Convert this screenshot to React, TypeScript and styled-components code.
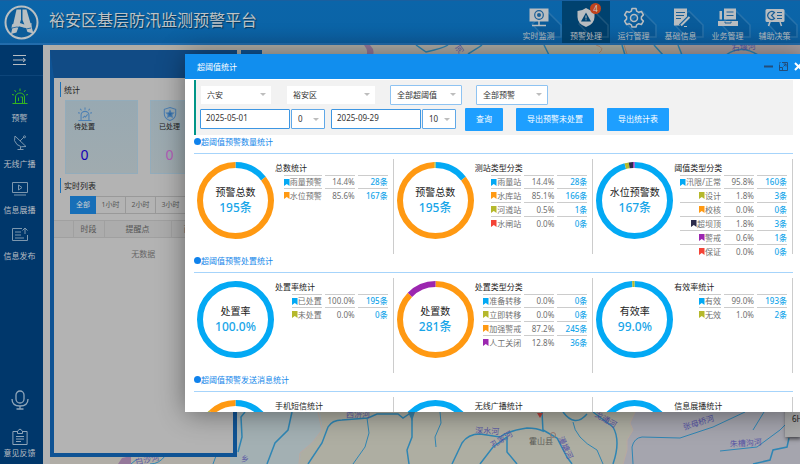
import React from 'react';
import styled, { createGlobalStyle } from 'styled-components';

const C = {
  blue: '#03a9f4',
  orange: '#ff9912',
  olive: '#b5b82c',
  navy: '#2c2c4c',
  purple: '#9c27b0',
  red: '#f44336',
  primary: '#118eee',
};

const GlobalStyle = createGlobalStyle`
  *, *::before, *::after { box-sizing: border-box; }
  body {
    margin: 0;
    font-family: "Noto Sans", "Noto Sans CJK SC", sans-serif;
    font-size: 8px;
    line-height: 12px;
    color: #222;
  }
  button, input, select { font: inherit; color: inherit; margin: 0; }
  svg { display: block; }
`;

/* ---------- shell ---------- */

const Shell = styled.div`
  position: relative;
  display: flex;
  flex-direction: column;
  height: 100vh;
  overflow: hidden;
  background: #b4b4b4;
`;

const Header = styled.header`
  display: flex;
  justify-content: space-between;
  height: 45px;
  flex: none;
  padding: 0 2px 0 4px;
  background: linear-gradient(#0b65a9, #0b64a7 60%, #0c5c9c);
  border-top: 1px solid #1a5f9f;
  border-bottom: 2px solid #226cac;
`;

const Brand = styled.div`
  display: flex;
  align-items: center;
  gap: 10px;
`;

const Title = styled.h1`
  margin: 0;
  padding-bottom: 4px;
  font-size: 16px;
  line-height: 20px;
  font-weight: 400;
  color: #bdc3c6;
  text-shadow: 1px 1px 1px rgba(0, 0, 0, 0.5);
`;

const Nav = styled.nav`
  display: flex;
`;

const NavItem = styled.button<{ $active?: boolean }>`
  position: relative;
  display: flex;
  flex-direction: column;
  align-items: center;
  gap: 2px;
  width: ${p => (p.$active ? 48 : 47)}px;
  padding: 6px 0 0;
  border: 0;
  overflow: hidden;
  white-space: nowrap;
  background: ${p => (p.$active ? '#00426f' : 'transparent')};
  color: #b8bcbf;
`;

const Badge = styled.span`
  position: absolute;
  top: 2px;
  right: 9px;
  width: 11px;
  height: 11px;
  border-radius: 50%;
  background: #c0431c;
  color: #ccc;
  line-height: 11px;
  text-align: center;
`;

const Main = styled.div`
  display: flex;
  flex: 1;
  min-height: 0;
`;

const Sidebar = styled.aside`
  display: flex;
  flex-direction: column;
  width: 43px;
  flex: none;
  padding-right: 4px;
  padding-bottom: 5px;
  background: #00376b;
  color: #b8bdc2;
`;

const SideToggle = styled.button`
  display: flex;
  justify-content: center;
  align-items: center;
  height: 31px;
  margin: 0 -4px 2px 0;
  padding: 0 4px 0 0;
  border: 0;
  border-bottom: 1px solid #0d457a;
  background: none;
  color: #b8bdc2;
`;

const SideItem = styled.button`
  display: flex;
  flex-direction: column;
  align-items: center;
  justify-content: space-between;
  height: 36px;
  margin-top: 10px;
  padding: 0;
  border: 0;
  background: none;
  white-space: nowrap;
`;

const SideFoot = styled.div`
  display: flex;
  flex-direction: column;
  align-items: center;
  gap: 18px;
  margin-top: auto;
`;

const FootButton = styled.button`
  display: flex;
  flex-direction: column;
  align-items: center;
  gap: 1px;
  padding: 0;
  border: 0;
  background: none;
  white-space: nowrap;
`;

/* ---------- map and left panel ---------- */

const MapArea = styled.main`
  position: relative;
  flex: 1;
  min-width: 0;
  background: #aeaea2;
`;

const MapSvg = styled.svg`
  width: 100%;
  height: 100%;
  font-size: 8px;
`;

const Panel = styled.section`
  position: absolute;
  top: 5px;
  bottom: 7px;
  left: 7px;
  width: 187px;
  display: flex;
  flex-direction: column;
  border: 4px solid #0f5394;
  border-top: 28px solid #114b85;
  background: #b3b3b3;
  overflow: hidden;
`;

const PanelTab = styled.div`
  position: absolute;
  top: 5px;
  left: 198px;
  width: 21px;
  height: 28px;
  background: #0f5394;
`;

const PanelTitle = styled.h2`
  margin: 4px 0 3px 6px;
  padding-left: 3px;
  border-left: 1px solid #1a70b8;
  font-size: 8px;
  font-weight: 400;
  line-height: 15px;
`;

const StatRow = styled.div`
  display: grid;
  grid-template-columns: repeat(2, 73px);
  gap: 12px;
  padding-left: 11px;
`;

const StatCard = styled.div`
  display: flex;
  height: 74px;
  border: 1px solid #93acbb;
  background: linear-gradient(#98a9b2, #a0abaf);
`;

const StatContent = styled.div`
  display: flex;
  flex-direction: column;
  align-items: center;
  width: 37px;
  padding-top: 6px;
  font-size: 7px;
`;

const StatValue = styled.strong<{ $color: string }>`
  margin-top: 13px;
  font-size: 14px;
  line-height: 18px;
  font-weight: 400;
  color: ${p => p.$color};
`;

const Tabs = styled.div`
  display: flex;
  padding: 0 0 6px 16px;
`;

const Tab = styled.button<{ $active?: boolean }>`
  flex: none;
  width: ${p => (p.$active ? 26 : 30)}px;
  height: 18px;
  padding: 0;
  border: 1px solid ${p => (p.$active ? '#176fb8' : '#999')};
  border-left-width: ${p => (p.$active ? 1 : 0)}px;
  background: ${p => (p.$active ? '#176fb8' : 'transparent')};
  color: ${p => (p.$active ? '#d0d0d0' : '#555')};
  font-size: 7px;
  line-height: 12px;
`;

const ListTable = styled.table`
  width: 100%;
  table-layout: fixed;
  border-collapse: collapse;
  color: #555;

  th {
    height: 17px;
    padding: 0;
    border: 1px solid #a0a0a0;
    border-left: 0;
    background: #acacac;
    font-weight: 400;
    line-height: 12px;
  }
  td {
    padding: 10px 0;
    text-align: center;
    color: #666;
  }
`;

const Col = styled.col<{ $w: number }>`
  width: ${p => p.$w}px;
`;

/* ---------- dialog ---------- */

const Dialog = styled.section`
  position: absolute;
  top: 54px;
  right: -4px;
  bottom: 52px;
  left: 185px;
  display: flex;
  flex-direction: column;
  background: #fff;
  box-shadow: 1px 1px 26px rgba(0, 0, 0, 0.45);
`;

const DialogBar = styled.header`
  display: flex;
  align-items: center;
  justify-content: space-between;
  height: 25px;
  flex: none;
  padding: 0 1px 0 12px;
  background: ${C.primary};
  color: #fff;

  h2 { margin: 0; font-size: 8px; font-weight: 400; }
`;

const WindowButtons = styled.div`
  display: flex;
  align-items: center;
  gap: 6px;
`;

const IconButton = styled.button`
  padding: 0;
  border: 0;
  background: none;
`;

const DialogBody = styled.div`
  flex: 1;
  min-height: 0;
  padding: 1px 11px 0 9px;
  overflow: auto;
  scrollbar-width: none;
`;

const Filters = styled.form`
  display: flex;
  flex-direction: column;
  justify-content: center;
  gap: 3px;
  height: 55px;
  padding-left: 4px;
  border-left: 2px solid #009688;
  background: #f2f2f2;
`;

const FilterRow = styled.div<{ $gap: number }>`
  display: flex;
  align-items: center;
  gap: ${p => p.$gap}px;
`;

const FieldPair = styled.div`
  display: flex;
  gap: 1px;
`;

const Actions = styled.div`
  display: flex;
  gap: 13px;
  margin-left: 3px;
`;

const SelectBox = styled.label<{ $w: number; $border: string }>`
  display: grid;
  grid-template: 'field' / 1fr;
  align-items: center;
  width: ${p => p.$w}px;
  height: 20px;
  border: 1px solid ${p => p.$border};
  border-radius: 1px;
  background: #fff;
  background-clip: padding-box;

  select {
    grid-area: field;
    width: 100%;
    height: 18px;
    padding: 0 0 0 6px;
    border: 0;
    outline: 0;
    appearance: none;
    background: none;
    line-height: 12px;
    color: #333;
  }
  svg {
    grid-area: field;
    justify-self: end;
    margin-right: 5px;
    pointer-events: none;
  }
`;

const DateInput = styled.input<{ $w: number }>`
  width: ${p => p.$w}px;
  height: 20px;
  padding: 0 0 3px 5px;
  border: 1px solid #3d96e2;
  border-radius: 1px;
  outline: 0;
  background: #fff;
  color: #333;
`;

const ActionButton = styled.button`
  height: 23px;
  padding: 0 11px;
  border: 0;
  border-radius: 1px;
  background: #1e9fff;
  color: #fff;
`;

const SectionTitle = styled.h3`
  display: flex;
  align-items: center;
  height: 19px;
  margin: 0;
  padding-bottom: 5px;
  border-bottom: 1px solid #a6d4fb;
  font-size: 8px;
  font-weight: 400;
  color: #1487ea;

  &::before {
    content: '';
    width: 7px;
    height: 7px;
    border-radius: 50%;
    background: #0f82ec;
  }
`;

const CardGrid = styled.div`
  display: grid;
  grid-template-columns: repeat(3, 1fr);
  padding-top: 5px;
`;

const Card = styled.article`
  display: flex;
  gap: 1px;
  height: 95px;
  padding: 3px 5px 0 3px;
  border-right: 1px solid #ccc;
`;

const DonutBox = styled.div`
  display: grid;
  grid-template: 'ring' 77px / 77px;
  flex: none;

  > * { grid-area: ring; }
`;

const DonutText = styled.div`
  display: flex;
  flex-direction: column;
  align-items: center;
  justify-content: center;
  padding-bottom: 1px;
  font-size: 10px;
  line-height: 15px;
  color: #222;
  white-space: nowrap;

  strong { font-size: 12px; font-weight: 500; color: #18a5e8; }
`;

const Legend = styled.div`
  display: flex;
  flex-direction: column;
  flex: 1;
  min-width: 0;

  h4 { margin: 0 0 1px; font-size: 8px; font-weight: 400; }
`;

const LegendTable = styled.table`
  align-self: flex-end;
  border-collapse: separate;
  border-spacing: 3px 0;
  margin-right: -3px;
  color: #707070;

  td {
    height: 14px;
    padding: 0;
    border-top: 1px solid #ccc;
    line-height: 12px;
    text-align: right;
    white-space: nowrap;
  }
  tr:first-child td { height: 13px; }
  td:nth-child(n + 2) { width: 30px; }
  td:last-child { color: #16a6ea; font-weight: 500; }
`;

const Name = styled.span`
  display: flex;
  align-items: center;
  justify-content: flex-end;
`;

/* ---------- drawings ---------- */

const Logo = () => (
  <svg width="35" height="35" viewBox="0 0 35 35" aria-hidden="true">
    <circle cx="17.5" cy="17.5" r="16" fill="#0c5c99" stroke="#b9bfc2" strokeWidth="2" />
    <g fill="#b9bfc2">
      <path d="M12.500 4.500h4.500v10l-1.500 5-3 8-5.500 1.500z" />
      <path d="M18.500 4.500H22.500l7 24-6-1.500-5-12z" />
      <path d="M8 19.500q5-3 9.500-1t10-.5v4q-5 2-10 0t-10 1.500z" />
    </g>
    <path d="M8 23q5-2 9.500 0t9.500 0" fill="none" stroke="#0c5c99" strokeWidth=".8" />
  </svg>
);

const navShadow = <path d="M19 4L33 18V30H16L4 17z" fill="#003058" opacity=".16" />;
const NavSvg = ({ children }: { children: React.ReactNode }) => (
  <svg width="22" height="21" viewBox="0 0 22 21" overflow="visible" fill="none" stroke="#b9bdc0" strokeWidth="1.5" aria-hidden="true">
    {children}
  </svg>
);

const navIcons = {
  monitor: (
    <NavSvg>
      {navShadow}
      <path d="M1.500 1.500h19v13h-19z" fill="#b9bdc0" stroke="none" />
      <circle cx="11" cy="8" r="4.300" stroke="#1b5f96" strokeWidth="1.200" />
      <circle cx="11" cy="8" r="2" fill="#1b5f96" stroke="none" />
      <path d="M11 14v4M4 18.500h14" />
    </NavSvg>
  ),
  shield: (
    <NavSvg>
      {navShadow}
      <path d="M11 1q4 3 8.500 3v6q0 7-8.500 10Q2.500 17 2.500 10V4Q7 4 11 1z" fill="#b9bdc0" stroke="none" />
      <path d="M11 5.500l5 9H6z" fill="#00426f" stroke="none" />
      <path d="M11 8.500v3M11 12.300v1" stroke="#b9bdc0" strokeWidth="1" />
    </NavSvg>
  ),
  gear: (
    <NavSvg>
      {navShadow}
      <path d="M9 1.500h4l.7 2.700 2 1.100 2.700-.8 2 3.400-2 2v2.200l2 2-2 3.400-2.700-.8-2 1.100-.7 2.200H9l-.7-2.200-2-1.100-2.700.8-2-3.400 2-2V9.900l-2-2 2-3.400 2.700.8 2-1.100z" strokeLinejoin="round" />
      <circle cx="11" cy="11" r="3.500" />
    </NavSvg>
  ),
  note: (
    <NavSvg>
      {navShadow}
      <path d="M4 1.500h13v9l-7 8H4z" fill="#b9bdc0" stroke="none" />
      <path d="M6 5.500h9M6 8.500h8M6 11.500h5" stroke="#1b5f96" strokeWidth="1" />
      <path d="M10 18.500l9-9" strokeWidth="3" stroke="#0b5f9f" />
      <path d="M11 18.500l8.500-8.500" strokeWidth="2" />
      <path d="M14 19.500h3" strokeWidth="1" />
    </NavSvg>
  ),
  docs: (
    <NavSvg>
      {navShadow}
      <path d="M7 1.500h12v11H7zM2.500 4h2.500v8.500H2.500zM1 14h20v5H1z" fill="#b9bdc0" stroke="none" />
      <path d="M9.500 5h7M9.500 8.500h7M8 14.500v1.500h6v-1.500" stroke="#1b5f96" strokeWidth="1" />
    </NavSvg>
  ),
  board: (
    <NavSvg>
      {navShadow}
      <rect x="1.500" y="2" width="19" height="13" rx="1.500" fill="#b9bdc0" stroke="none" />
      <path d="M10.500 5.500a4 4 0 1 0 0 6L7.500 8.500z" stroke="#1b5f96" strokeWidth="1.200" />
      <path d="M13 5.500h5M13 8.500h5M13 11.500h5" stroke="#1b5f96" strokeWidth="1" />
      <path d="M6 15l-1.500 4M16 15l1.500 4" />
    </NavSvg>
  ),
};

const SideSvg = ({ children, color = '#7d97ae' }: { children: React.ReactNode; color?: string }) => (
  <svg width="16" height="16" viewBox="0 0 16 16" fill="none" stroke={color} strokeWidth="1" aria-hidden="true">
    {children}
  </svg>
);

const beacon = (
  <>
    <path d="M.5 15.500h15M3.500 15V9a4.500 4 0 0 1 9 0v6" />
    <path d="M8 .5v2.500M2.500 2l1.500 2M13.500 2L12 4M0 6.500l2 .5M16 6.500l-2 .5" />
  </>
);

const sideIcons = {
  alarm: (
    <SideSvg color="#35b51f">
      {beacon}
      <path d="M6.500 13V9.500M8.500 9h2v6" />
    </SideSvg>
  ),
  dish: (
    <SideSvg>
      <path d="M3 2Q1 7 5 10.500t9 2zM8 7l4-4M8.500 13v2.500M5.500 15.500h6" />
      <circle cx="12.500" cy="2.800" r="1" />
    </SideSvg>
  ),
  screen: (
    <SideSvg>
      <path d="M.5 2.500h15v10H.5zM2 15h12" />
      <path d="M6.500 5v5l3.500-2.500z" />
    </SideSvg>
  ),
  publish: (
    <SideSvg>
      <path d="M10 2.500H.5v12h15V9M3 6h6M3 9h6M3 12h9M13 8V2M10.500 4.500L13 2l2.500 2.500" />
    </SideSvg>
  ),
};

const StatIcon = ({ shield }: { shield?: boolean }) => (
  <svg width="14" height="14" viewBox="0 0 16 16" fill="none" stroke="#4d80b4" strokeWidth="1.200" aria-hidden="true">
    {shield ? (
      <>
        <path d="M8 .6l6.500 2V8q0 5-6.500 7.500Q1.500 13 1.500 8V2.600z" />
        <path d="M8 4l1.200 2.500 2.800.3-2 1.900.5 2.800L8 10.200l-2.500 1.300.5-2.800-2-1.900 2.800-.3z" fill="#2f6ca8" />
      </>
    ) : (
      <>
        {beacon}
        <path d="M5.500 12.500l2-2 1 1 2.500-3" />
      </>
    )}
  </svg>
);

const Flag = ({ color }: { color: string }) => (
  <svg width="6" height="7" viewBox="0 0 6 7" aria-hidden="true">
    <path d="M0 0h5.500v7L2.800 5 0 7z" fill={color} />
  </svg>
);

type Slice = [number, string];

const Donut = ({ slices, label, value }: { slices: Slice[]; label: string; value: string }) => {
  let start = 0;
  return (
    <DonutBox>
      <svg viewBox="0 0 77 77" fill="none" strokeWidth="6" aria-hidden="true">
        <g transform="rotate(-90 38.5 38.5)">
          {slices.map(([size, color], i) => {
            const offset = -start;
            start += size;
            return (
              <circle key={i} cx="38.5" cy="38.5" r="35.500" pathLength={100} stroke={color}
                strokeDasharray={`${size} ${100 - size}`} strokeDashoffset={offset} />
            );
          })}
        </g>
      </svg>
      <DonutText>
        <span>{label}</span>
        <strong>{value}</strong>
      </DonutText>
    </DonutBox>
  );
};

const River = styled.path<{ $thin?: boolean }>`
  fill: none;
  stroke: #2f86b4;
  stroke-width: ${p => (p.$thin ? 1 : 1.5)};
`;

const MapView = () => (
  <MapSvg viewBox="43 45 757 419" preserveAspectRatio="xMinYMin slice" aria-label="地图">
    <path d="M43 45h757v419H43z" fill="#b0ada6" />
    <path d="M510 45h120v20H510z" fill="#aeb0a2" />
    <path d="M624 45h56v20h-56z" fill="#b3a79c" />
    <path d="M680 45h120v20H680z" fill="#a99ea0" />
    <path d="M230 400h95l-4 12 2 18-10 13-12 10-1 11h-70z" fill="#a3b0b3" />
    <path d="M320 400h316l-1 12-5 11 3 7-6 10v10l-4 14H300l1-11 12-10 10-13-3-18z" fill="#aeaea2" />
    <path d="M636 400h164v64H623l4-14v-10l6-10-3-7 5-11z" fill="#a5a5ae" />
    <path d="M318 412l4 18-10 13-12 10-1 11M635 412l-5 11 3 7-6 10v10l-4 14" fill="none" stroke="#b9a9a0" />
    <path d="M43 45h7v419h-7z" fill="#b2b2b2" />
    <path d="M118 464l4-6 9-2v8zM364 45h6q6 6 2 12l-6-1q3-5-2-11z" fill="#95789a" />
    <path d="M596 45q10 3 3 8M624 45l4 12" fill="none" stroke="#b08a70" />

    <River d="M245 412l-4 5 1 20-4 15M292 412l-4 18-13 13-8 21M308 464l14-21 6-16q4-7 14-7l26-2 9-4h21l5 4 9-6M412 400v37l-5 13 2 14" />
    <River $thin d="M367 418l2 15-4 14-12 17M440 412l1 11-6 14 1 10" />
    <path d="M408 412h7l-3 9z" fill="#3a86ad" />
    <River d="M452 464l10-21q6-9 18-9l20 3q8-6 27-9 10 0 16 3l-1-19M543 430l14 8 10 19 5 7M480 464l13-17 14-10v15l10 12M563 412q12 16 24 2M593 412l20 15q8 14 0 37" />
    <River $thin d="M573 422q2 16 24 28l6 14M633 464l-1-17q2-9 10-10l38 1 33-11 32-15M720 451l37-4 23-17 5-5M764 412l-11 18M131 464l6-5M165 456q-6 8-15 8M216 456l-3 8" />
    <River d="M753 464l17-4 3-10 14-3 2-9" />
    <River d="M416 45l10 7q18-4 22-7M468 54q10-6 14-9M544 45l5 10M622 45l3 10M654 45l9 10M678 45l4 10M726 55q15-11 32 0" />
    <circle cx="553" cy="435" r="2.500" fill="none" stroke="#98786f" />
    <path d="M537 413h6l-3 5z" fill="#b8403c" />

    <g fill="#5755a5">
      <text x="346" y="417">西淠河</text>
      <text transform="translate(475 433) rotate(4)">深水河</text>
      <text transform="translate(493 448) rotate(-32)">孔家河</text>
      <text transform="translate(558 438) rotate(65)">漫塘河</text>
      <text transform="translate(594 416) rotate(30)">戈通河</text>
      <text transform="translate(684 430) rotate(-17)">张母桥河</text>
      <text transform="translate(730 447) rotate(-4)">朱槽沟河</text>
      <text transform="translate(136 465) rotate(-12)">白沙河</text>
      <text x="241" y="462">乡</text>
      <text transform="translate(732 51) rotate(-5)">石堰河</text>
      <text transform="translate(458 54) rotate(-35)">河</text>
    </g>
    <text x="529" y="444" fill="#5d5d58">霍山县</text>
  </MapSvg>
);

const RangeTag = styled.div`
  position: absolute;
  right: 0;
  bottom: 27px;
  width: 15px;
  height: 35px;
  padding: 11px 0 0 7px;
  overflow: hidden;
  background: #a9a9a9;
  box-shadow: 1px 2px 4px rgba(0, 0, 0, 0.6);
`;

/* ---------- data ---------- */

const navItems: { label: string; icon: keyof typeof navIcons; badge?: number }[] = [
  { label: '实时监测', icon: 'monitor' },
  { label: '预警处理', icon: 'shield', badge: 4 },
  { label: '运行管理', icon: 'gear' },
  { label: '基础信息', icon: 'note' },
  { label: '业务管理', icon: 'docs' },
  { label: '辅助决策', icon: 'board' },
];

const sideItems: { label: string; icon: keyof typeof sideIcons }[] = [
  { label: '预警', icon: 'alarm' },
  { label: '无线广播', icon: 'dish' },
  { label: '信息展播', icon: 'screen' },
  { label: '信息发布', icon: 'publish' },
];

type Row = [string, string, string, string];
interface CardData {
  title: string;
  label: string;
  value: string;
  slices: Slice[];
  rows: Row[];
}

const sections: { title: string; cards: CardData[] }[] = [
  {
    title: '超阈值预警数量统计',
    cards: [
      {
        title: '总数统计', label: '预警总数', value: '195条',
        slices: [[14.4, C.blue], [85.6, C.orange]],
        rows: [['雨量预警', '14.4%', '28条', C.blue], ['水位预警', '85.6%', '167条', C.orange]],
      },
      {
        title: '测站类型分类', label: '预警总数', value: '195条',
        slices: [[14.4, C.blue], [85.1, C.orange], [0.5, C.olive]],
        rows: [
          ['雨量站', '14.4%', '28条', C.blue],
          ['水库站', '85.1%', '166条', C.orange],
          ['河道站', '0.5%', '1条', C.olive],
          ['水闸站', '0.0%', '0条', C.red],
        ],
      },
      {
        title: '阈值类型分类', label: '水位预警数', value: '167条',
        slices: [[95.8, C.blue], [1.8, C.olive], [1.8, C.navy], [0.6, C.purple]],
        rows: [
          ['汛限/正常', '95.8%', '160条', C.blue],
          ['设计', '1.8%', '3条', C.olive],
          ['校核', '0.0%', '0条', C.orange],
          ['超坝顶', '1.8%', '3条', C.navy],
          ['警戒', '0.6%', '1条', C.purple],
          ['保证', '0.0%', '0条', C.red],
        ],
      },
    ],
  },
  {
    title: '超阈值预警处置统计',
    cards: [
      {
        title: '处置率统计', label: '处置率', value: '100.0%',
        slices: [[100, C.blue]],
        rows: [['已处置', '100.0%', '195条', C.blue], ['未处置', '0.0%', '0条', C.olive]],
      },
      {
        title: '处置类型分类', label: '处置数', value: '281条',
        slices: [[87.2, C.orange], [12.8, C.purple]],
        rows: [
          ['准备转移', '0.0%', '0条', C.blue],
          ['立即转移', '0.0%', '0条', C.olive],
          ['加强警戒', '87.2%', '245条', C.orange],
          ['人工关闭', '12.8%', '36条', C.purple],
        ],
      },
      {
        title: '有效率统计', label: '有效率', value: '99.0%',
        slices: [[99, C.blue], [1, C.olive]],
        rows: [['有效', '99.0%', '193条', C.blue], ['无效', '1.0%', '2条', C.olive]],
      },
    ],
  },
  {
    title: '超阈值预警发送消息统计',
    cards: [
      { title: '手机短信统计', label: '', value: '', slices: [[70, C.blue], [18, C.olive], [12, C.orange]], rows: [] },
      { title: '无线广播统计', label: '', value: '', slices: [[100, C.blue]], rows: [] },
      { title: '信息展播统计', label: '', value: '', slices: [[100, C.blue]], rows: [] },
    ],
  },
];

const Picker = ({ name, value, width, border }: { name: string; value: string; width: number; border: string }) => (
  <SelectBox $w={width} $border={border}>
    <select aria-label={name} defaultValue={value}>
      <option>{value}</option>
    </select>
    <svg width="6" height="3" viewBox="0 0 6 3" aria-hidden="true">
      <path d="M0 0h6L3 3z" fill="#bdbdbd" />
    </svg>
  </SelectBox>
);

const StatDialog = () => (
  <Dialog role="dialog" aria-labelledby="dialog-title">
    <DialogBar>
      <h2 id="dialog-title">超阈值统计</h2>
      <WindowButtons>
        <IconButton aria-label="最小化">
          <svg width="9" height="9"><path d="M0 4.500h9" stroke="#234d7a" strokeWidth="2" /></svg>
        </IconButton>
        <IconButton aria-label="最大化">
          <svg width="9" height="9" fill="none" stroke="#234d7a">
            <path d="M3 .5h5.500v8H.5V3M.5 5.500h3v3M4.500 4.500L7 2M4.500 2H7v2.500" />
            <path d="M.5 2.500v-2h2" strokeDasharray="1 1" />
          </svg>
        </IconButton>
        <IconButton aria-label="关闭">
          <svg width="9" height="9"><path d="M1 1l7 7M8 1L1 8" stroke="#fff" strokeWidth="2" /></svg>
        </IconButton>
      </WindowButtons>
    </DialogBar>
    <DialogBody>
      <Filters onSubmit={e => e.preventDefault()}>
        <FilterRow $gap={14}>
          <Picker name="市" value="六安" width={72} border="transparent" />
          <Picker name="区县" value="裕安区" width={90} border="transparent" />
          <Picker name="阈值" value="全部超阈值" width={72} border="#8ec3f2" />
          <Picker name="预警类型" value="全部预警" width={72} border="#8ec3f2" />
        </FilterRow>
        <FilterRow $gap={6}>
          <FieldPair>
            <DateInput $w={90} aria-label="开始日期" defaultValue="2025-05-01" />
            <Picker name="开始时" value="0" width={34} border="#5fa8e8" />
          </FieldPair>
          <FieldPair>
            <DateInput $w={90} aria-label="结束日期" defaultValue="2025-09-29" />
            <Picker name="结束时" value="10" width={34} border="#5fa8e8" />
          </FieldPair>
          <Actions>
            <ActionButton>查询</ActionButton>
            <ActionButton>导出预警未处置</ActionButton>
            <ActionButton>导出统计表</ActionButton>
          </Actions>
        </FilterRow>
      </Filters>
      {sections.map(section => (
        <section key={section.title}>
          <SectionTitle>{section.title}</SectionTitle>
          <CardGrid>
            {section.cards.map(card => (
              <Card key={card.title}>
                <Donut slices={card.slices} label={card.label} value={card.value} />
                <Legend>
                  <h4>{card.title}</h4>
                  <LegendTable>
                    <tbody>
                      {card.rows.map(([name, pct, count, color]) => (
                        <tr key={name}>
                          <td><Name><Flag color={color} />{name}</Name></td>
                          <td>{pct}</td>
                          <td>{count}</td>
                        </tr>
                      ))}
                    </tbody>
                  </LegendTable>
                </Legend>
              </Card>
            ))}
          </CardGrid>
        </section>
      ))}
    </DialogBody>
  </Dialog>
);

export default function App() {
  return (
    <Shell>
      <GlobalStyle />
      <Header>
        <Brand>
          <Logo />
          <Title>裕安区基层防汛监测预警平台</Title>
        </Brand>
        <Nav>
          {navItems.map(item => (
            <NavItem key={item.label} $active={!!item.badge}>
              {navIcons[item.icon]}
              <span>{item.label}</span>
              {item.badge && <Badge>{item.badge}</Badge>}
            </NavItem>
          ))}
        </Nav>
      </Header>
      <Main>
        <Sidebar>
          <SideToggle aria-label="展开菜单">
            <svg width="13" height="12" viewBox="0 0 13 12" fill="none" stroke="currentColor">
              <path d="M0 1.500h13M0 6h8M8 6h4M10 4l2.500 2L10 8M0 10.500h13" />
            </svg>
          </SideToggle>
          {sideItems.map(item => (
            <SideItem key={item.label}>
              {sideIcons[item.icon]}
              <span>{item.label}</span>
            </SideItem>
          ))}
          <SideFoot>
            <FootButton aria-label="语音">
              <svg width="18" height="20" viewBox="0 0 18 20" fill="none" stroke="#8fa5b9" strokeWidth="1.300">
                <rect x="5" y="1" width="8" height="12" rx="4" />
                <path d="M1 9q0 7 8 7t8-7M9 16v3M5.500 19h7" />
              </svg>
            </FootButton>
            <FootButton>
              <svg width="16" height="18" viewBox="0 0 16 18" fill="none" stroke="#8fa5b9">
                <path d="M5 3.500H.9v13h14.200v-13H11M4 8.500h8M4 11h8M4 13.500h5M5.500 5.500V3L8 1l2.500 2v2.500z" />
              </svg>
              <span>意见反馈</span>
            </FootButton>
          </SideFoot>
        </Sidebar>
        <MapArea>
          <MapView />
          <PanelTab />
          <RangeTag>6H</RangeTag>
          <Panel>
            <PanelTitle>统计</PanelTitle>
            <StatRow>
              <StatCard>
                <StatContent>
                  <StatIcon />
                  <span>待处置</span>
                  <StatValue $color="#1400b4">0</StatValue>
                </StatContent>
              </StatCard>
              <StatCard>
                <StatContent>
                  <StatIcon shield />
                  <span>已处理</span>
                  <StatValue $color="#b45cb8">0</StatValue>
                </StatContent>
              </StatCard>
            </StatRow>
            <PanelTitle>实时列表</PanelTitle>
            <Tabs>
              <Tab $active>全部</Tab>
              <Tab>1小时</Tab>
              <Tab>2小时</Tab>
              <Tab>3小时</Tab>
            </Tabs>
            <ListTable>
              <colgroup>
                <Col $w={19} />
                <Col $w={31} />
                <Col $w={67} />
                <col />
              </colgroup>
              <thead>
                <tr>
                  <th aria-label="序号" />
                  <th>时段</th>
                  <th>提醒点</th>
                  <th>雨量(mm)</th>
                </tr>
              </thead>
              <tbody>
                <tr><td colSpan={4}>无数据</td></tr>
              </tbody>
            </ListTable>
          </Panel>
        </MapArea>
      </Main>
      <StatDialog />
    </Shell>
  );
}
